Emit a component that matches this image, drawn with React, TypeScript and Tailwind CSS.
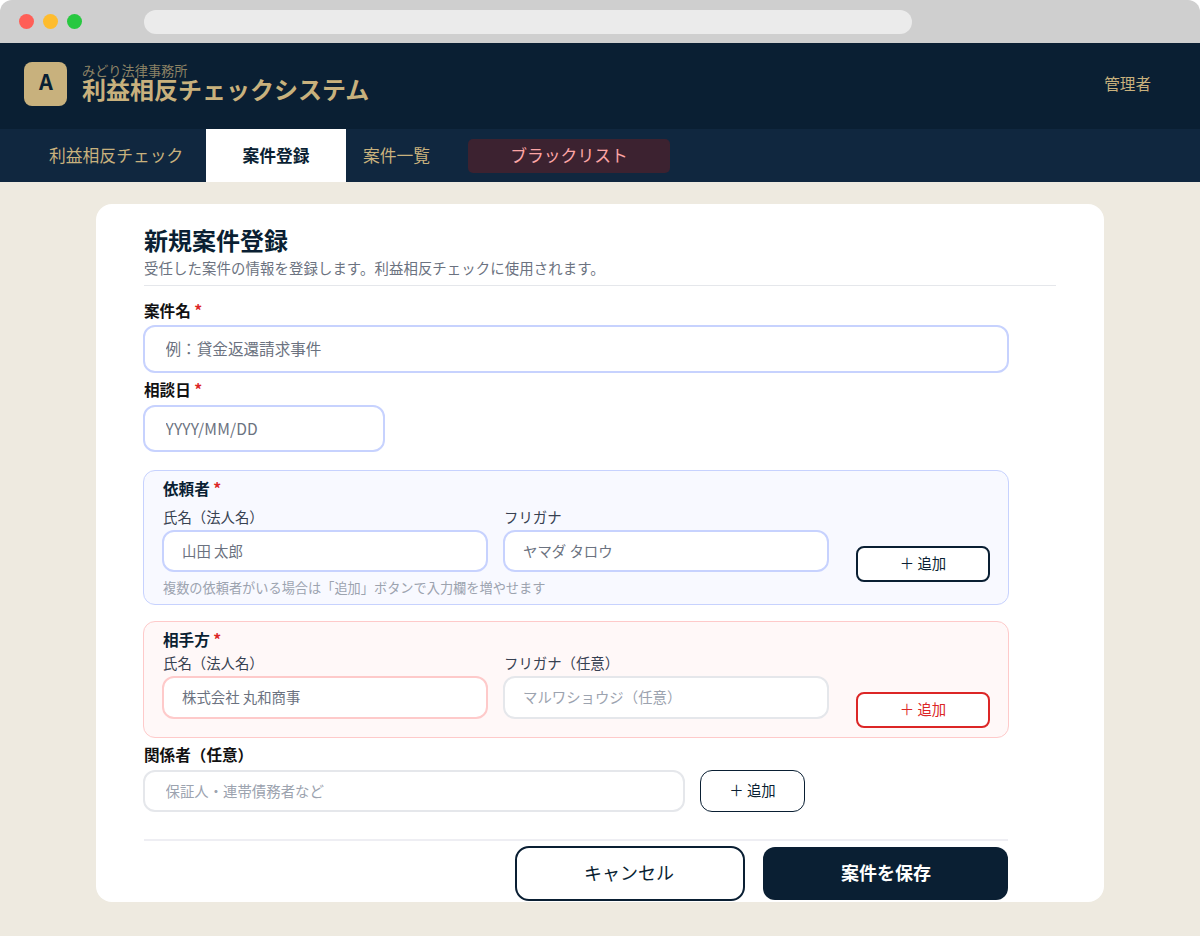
import React from 'react';
import clsx from 'clsx';

const NAV_TEXT = 'text-[16.8px] text-[#c8b17d]';

function Label({ children, required, className }: { children: React.ReactNode; required?: boolean; className?: string }) {
  return (
    <label className={clsx('block h-[22px] text-[15.6px] leading-[22px] font-bold', className)}>
      {children}
      {required && <span className="text-[#dc2626]"> *</span>}
    </label>
  );
}

function Field({ placeholder, className }: { placeholder: string; className?: string }) {
  return (
    <input
      type="text"
      placeholder={placeholder}
      className={clsx('block border-2 bg-white outline-none rounded-xl', className)}
    />
  );
}

function AddButton({ className }: { className?: string }) {
  return (
    <button type="button" className={clsx('bg-white pb-[2px] text-[14.4px] leading-5', className)}>
      ＋ 追加
    </button>
  );
}

function BrowserBar() {
  return (
    <div className="flex h-[43px] items-center rounded-t-xl bg-[#cfcfcf] pl-[19.2px]">
      <div className="flex gap-[9.6px]">
        <span className="size-[14.4px] rounded-full bg-[#ff5f57]" />
        <span className="size-[14.4px] rounded-full bg-[#febc2e]" />
        <span className="size-[14.4px] rounded-full bg-[#28c840]" />
      </div>
      <div className="ml-[62.4px] h-6 w-[768px] rounded-full bg-[#ebebeb]" />
    </div>
  );
}

function Header() {
  return (
    <header className="flex h-[86px] items-start justify-between bg-[#0a1f33] pl-6 pr-[49px]">
      <div className="flex">
        <div className="mt-[19px] flex h-[44px] w-[43px] justify-center rounded-lg bg-[#c8b17d] pl-px text-[21.6px] leading-[38px] font-bold text-[#0a1f33]">
          A
        </div>
        <div className="ml-[15px] pt-[20px]">
          <p className="h-[14px] text-[13.2px] leading-[16px] text-[#c8b17d]/70">みどり法律事務所</p>
          <h1 className="text-2xl leading-6 font-bold text-[#c8b17d]">利益相反チェックシステム</h1>
        </div>
      </div>
      <span className="mt-[28px] text-[15.6px] leading-6 text-[#c8b17d]">管理者</span>
    </header>
  );
}

function Nav() {
  return (
    <nav className="flex h-[53px] bg-[#10273f] pl-[49px] leading-[52px]">
      <a className={clsx(NAV_TEXT, 'w-[157px]')}>利益相反チェック</a>
      <a className="w-[140px] bg-white text-center text-[16.8px] font-bold text-[#0a1f33]">案件登録</a>
      <a className={clsx(NAV_TEXT, 'ml-[17px] w-[105px]')}>案件一覧</a>
      <a className="mt-[10px] h-[34px] w-[202px] rounded-[5px] bg-[#3c2230] text-center text-[16.8px] leading-[32px] text-[#fca5a5]">
        ブラックリスト
      </a>
    </nav>
  );
}

export default function App() {
  return (
    <div
      lang="ja"
      className="h-[936px] w-[1200px] overflow-hidden bg-white font-['Noto_Sans_CJK_JP',sans-serif]"
    >
      <BrowserBar />
      <Header />
      <Nav />

      <main className="h-[754px] bg-[#eeeae0] px-24 pt-[22px]">
        <form className="h-[698px] rounded-2xl bg-white px-12 pt-5 text-[#111111]">
          <h2 className="text-2xl leading-8 font-bold text-[#0a1f33]">新規案件登録</h2>
          <p className="text-[14.4px] leading-[23px] tracking-[0.1px] text-[#6b7280]">
            受任した案件の情報を登録します。利益相反チェックに使用されます。
          </p>
          <hr className="mt-[6px] border-[#e5e7eb]" />

          <div className="-ml-px w-[866px]">
            <Label required className="mt-[13px] pl-px">案件名</Label>
            <Field
              placeholder="例：貸金返還請求事件"
              className="mt-1 h-12 w-full border-[#c7d2fe] px-[20.5px] pb-[2px] text-[15.6px] placeholder:text-[#6b7280]"
            />

            <Label required className="mt-[5px] pl-px">相談日</Label>
            <Field
              placeholder="YYYY/MM/DD"
              className="mt-[5px] h-[47px] w-[242px] border-[#c7d2fe] px-[20.5px] pb-[2px] text-[15.6px] tracking-[0.15px] placeholder:text-[#6b7280]"
            />

            {/* 依頼者 */}
            <section className="mt-[18px] flex h-[135px] rounded-xl border border-[#c7d2fe] bg-[#f8f9ff] pl-[18px]">
              <div>
                <Label required className="mt-[6px] pl-px text-[#0a1f33]">依頼者</Label>
                <div className="mt-[8px] flex gap-[15px]">
                  <div>
                    <span className="block pl-px text-[14.4px] leading-5 text-[#374151]">氏名（法人名）</span>
                    <Field
                      placeholder="山田 太郎"
                      className="mt-[3px] h-[42px] w-[326px] border-[#c7d2fe] px-[18px] pb-[2px] text-[14.4px] placeholder:text-[#6b7280]"
                    />
                  </div>
                  <div>
                    <span className="block pl-px text-[14.4px] leading-5 text-[#374151]">フリガナ</span>
                    <Field
                      placeholder="ヤマダ タロウ"
                      className="mt-[3px] h-[42px] w-[326px] border-[#c7d2fe] px-[18px] pb-[2px] text-[14.4px] placeholder:text-[#6b7280]"
                    />
                  </div>
                </div>
                <p className="mt-[6px] pl-px text-[13.2px] leading-5 text-[#9ca3af]">
                  複数の依頼者がいる場合は「追加」ボタンで入力欄を増やせます
                </p>
              </div>
              <AddButton className="mt-[75px] ml-[27px] h-9 w-[134px] rounded-lg border-2 border-[#0a1f33] text-[#0a1f33]" />
            </section>

            {/* 相手方 */}
            <section className="mt-4 flex h-[117px] rounded-xl border border-[#fecaca] bg-[#fff8f8] pl-[18px]">
              <div>
                <Label required className="mt-[6px] pl-px text-[#0a1f33]">相手方</Label>
                <div className="mt-[3px] flex gap-[15px]">
                  <div>
                    <span className="block pl-px text-[14.4px] leading-5 text-[#374151]">氏名（法人名）</span>
                    <Field
                      placeholder="株式会社 丸和商事"
                      className="mt-[3px] h-[43px] w-[326px] border-[#fecaca] px-[18px] pb-[2px] text-[14.4px] placeholder:text-[#6b7280]"
                    />
                  </div>
                  <div>
                    <span className="block pl-px text-[14.4px] leading-5 text-[#374151]">フリガナ（任意）</span>
                    <Field
                      placeholder="マルワショウジ（任意）"
                      className="mt-[3px] h-[43px] w-[326px] border-[#e5e7eb] px-[18px] pb-[2px] text-[14.4px] placeholder:text-[#9ca3af]"
                    />
                  </div>
                </div>
              </div>
              <AddButton className="mt-[70px] ml-[27px] h-9 w-[134px] rounded-lg border-2 border-[#dc2626] text-[#dc2626]" />
            </section>

            <Label className="mt-[5px] pl-px">関係者（任意）</Label>
            <div className="mt-[5px] flex gap-[15px]">
              <Field
                placeholder="保証人・連帯債務者など"
                className="h-[42px] w-[542px] border-[#e5e7eb] px-[20.5px] pb-[2px] text-[14.4px] placeholder:text-[#9ca3af]"
              />
              <AddButton className="h-[42px] w-[105px] rounded-xl border border-[#0a1f33] text-[#0a1f33]" />
            </div>

            <hr className="mt-[27px] mr-px ml-px border-t-2 border-[#eeeef3]" />

            <div className="mt-[5px] mr-px flex items-start justify-end gap-[18px]">
              <button
                type="button"
                className="h-[55px] w-[230px] rounded-[14px] border-2 border-[#0a1f33] bg-white pr-[2px] pb-[3px] text-lg text-[#0a1f33]"
              >
                キャンセル
              </button>
              <button
                type="submit"
                className="mt-px h-[53px] w-[245px] rounded-xl bg-[#0a1f33] pb-[3px] pl-px text-lg font-bold text-white"
              >
                案件を保存
              </button>
            </div>
          </div>
        </form>
      </main>
    </div>
  );
}
